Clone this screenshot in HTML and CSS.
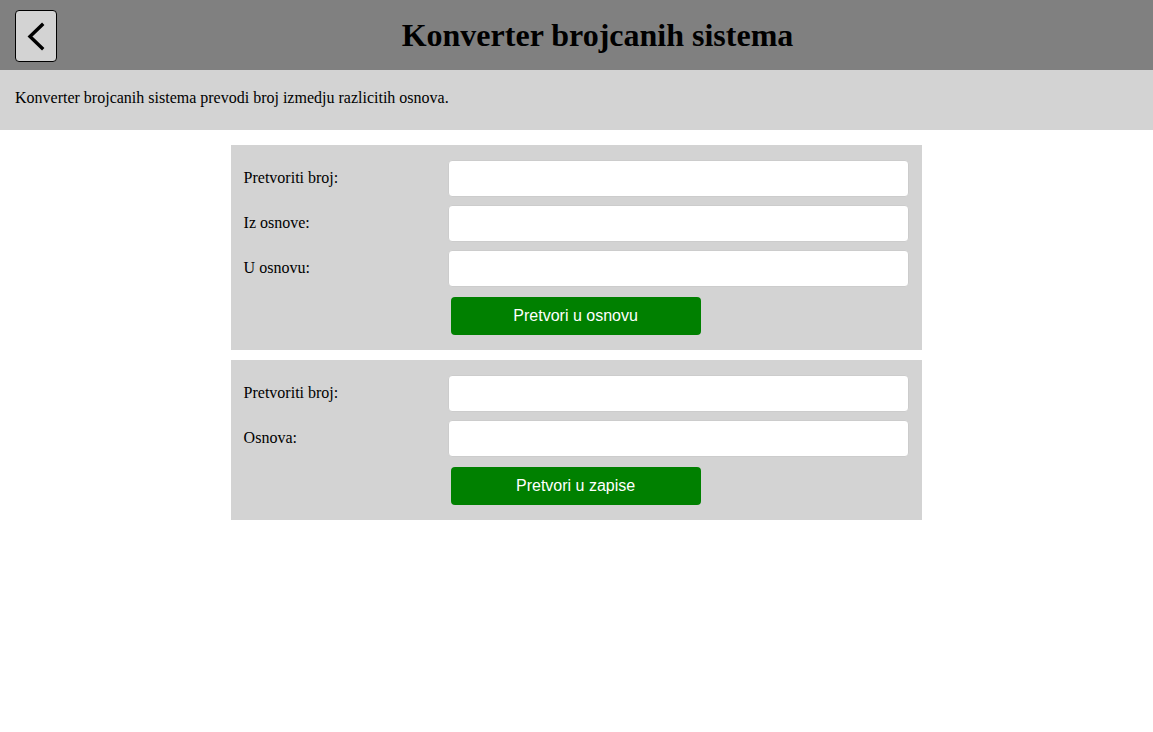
FILE: index.html
```html
<!DOCTYPE html>
<html>
<head>
<meta charset="utf-8">
<title>Konverter brojcanih sistema</title>
<link rel="stylesheet" href="styles.css">
</head>
<body>
<header class="header">
  <button class="back" type="button" aria-label="Nazad">
    <svg width="40" height="50" viewBox="0 0 40 50"><path d="M26 14 L14 25.5 L26 37" fill="none" stroke="#000" stroke-width="3.4" stroke-linecap="square"/></svg>
  </button>
  <h1 class="title">Konverter brojcanih sistema</h1>
</header>
<div class="desc">Konverter brojcanih sistema prevodi broj izmedju razlicitih osnova.</div>
<main class="main">
  <form class="card">
    <label class="lbl">Pretvoriti broj:</label>
    <input class="inp" type="text">
    <label class="lbl">Iz osnove:</label>
    <input class="inp" type="text">
    <label class="lbl">U osnovu:</label>
    <input class="inp" type="text">
    <span></span>
    <button class="btn" type="button">Pretvori u osnovu</button>
  </form>
  <form class="card">
    <label class="lbl">Pretvoriti broj:</label>
    <input class="inp" type="text">
    <label class="lbl">Osnova:</label>
    <input class="inp" type="text">
    <span></span>
    <button class="btn" type="button">Pretvori u zapise</button>
  </form>
</main>
</body>
</html>
```
FILE: styles.css
```css
html, body {
  margin: 0;
  padding: 0;
  background: #fff;
  font-family: "Liberation Serif", "Times New Roman", serif;
  font-size: 16px;
  color: #000;
}
.header {
  background: #808080;
  height: 70px;
  display: flex;
  align-items: flex-start;
  padding: 10px 15px 0;
  box-sizing: border-box;
}
.back {
  width: 42px;
  height: 52px;
  box-sizing: border-box;
  background: #d3d3d3;
  border: 1px solid #000;
  border-radius: 4px;
  padding: 0;
  display: flex;
  align-items: center;
  justify-content: center;
  flex: none;
}
.title {
  flex: 1;
  margin: 0;
  line-height: 50px;
  text-align: center;
  font-size: 32px;
  font-weight: bold;
}
.desc {
  background: #d3d3d3;
  height: 60px;
  box-sizing: border-box;
  display: flex;
  align-items: center;
  padding: 0 15px 4px;
}
.main {
  width: 60%;
  margin: 15px auto 0;
  display: flex;
  flex-direction: column;
  gap: 10px;
}
.card {
  background: #d3d3d3;
  padding: 15px 13px;
  display: grid;
  grid-template-columns: 204px 1fr;
  row-gap: 8px;
  align-items: start;
  margin: 0;
}
.lbl {
  line-height: 35px;
}
.inp {
  height: 37px;
  box-sizing: border-box;
  border: 1px solid #ccc;
  border-radius: 4px;
  background: #fff;
  margin: 0;
  font-size: 16px;
}
.btn {
  margin: 2px 0 0 3px;
  width: 250px;
  height: 38px;
  background: #008000;
  color: #fff;
  border: none;
  border-radius: 4px;
  font-family: "Liberation Sans", Arial, sans-serif;
  font-size: 16px;
  padding: 0;
}
```
